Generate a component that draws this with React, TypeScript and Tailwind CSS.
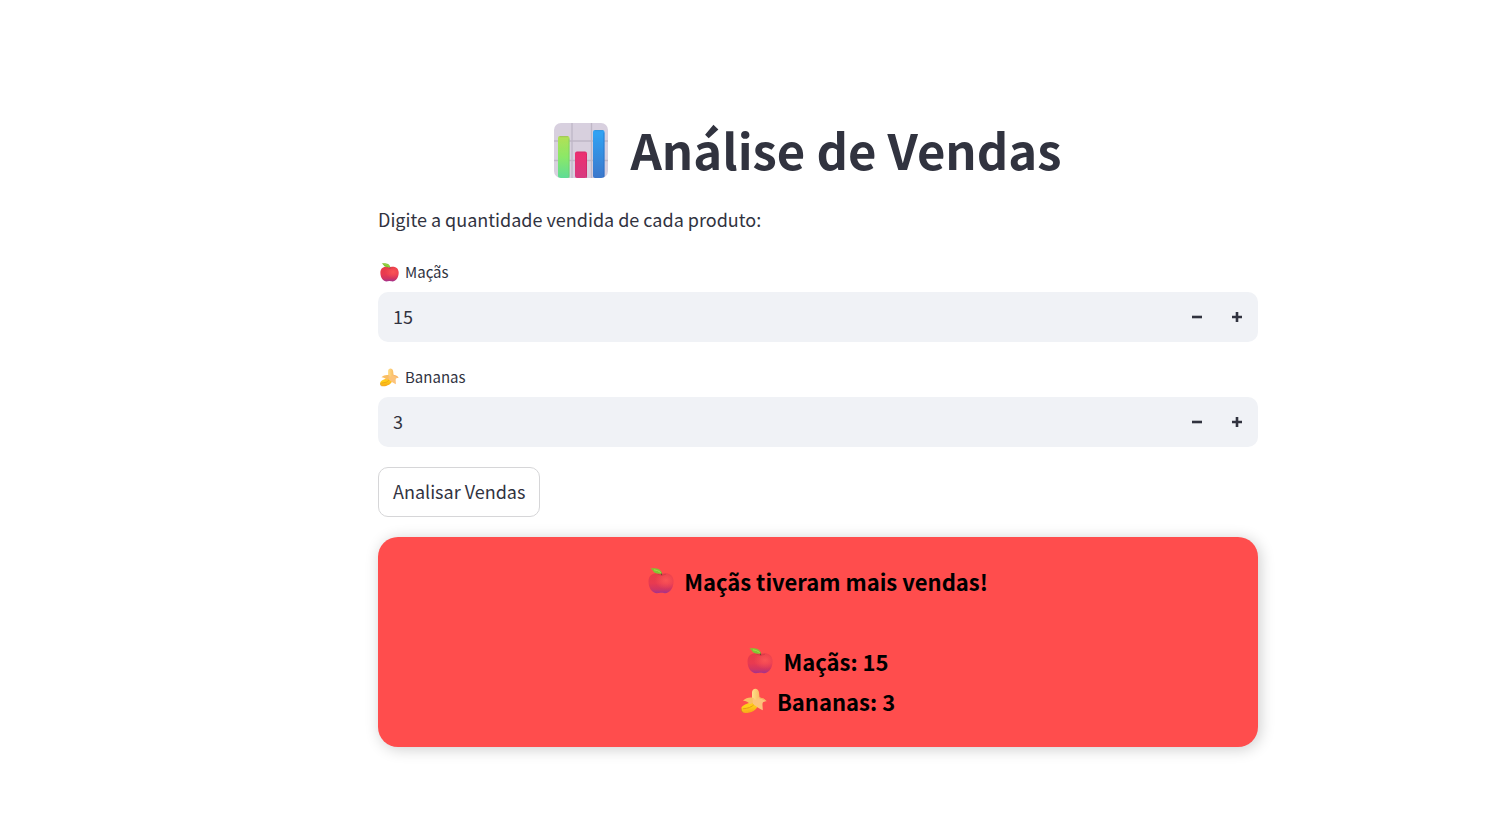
import { useId, useState } from "react";

type IconProps = { className?: string };

function ChartIcon({ className }: IconProps) {
  const id = useId();

  return (
    <svg viewBox="0 0 54 55" className={className} aria-hidden="true">
      <defs>
        <linearGradient id={`${id}-green`} x1="0" y1="0" x2="0" y2="1">
          <stop offset="0" stopColor="#b4e056" />
          <stop offset="0.5" stopColor="#8be868" />
          <stop offset="1" stopColor="#5fdc96" />
        </linearGradient>
        <linearGradient id={`${id}-pink`} x1="0" y1="0" x2="0" y2="1">
          <stop offset="0" stopColor="#ee2e70" />
          <stop offset="1" stopColor="#d63a80" />
        </linearGradient>
        <linearGradient id={`${id}-blue`} x1="0" y1="0" x2="0" y2="1">
          <stop offset="0" stopColor="#31a5f5" />
          <stop offset="1" stopColor="#3b77cb" />
        </linearGradient>
        <clipPath id={`${id}-frame`}>
          <rect width="54" height="55" rx="7" />
        </clipPath>
      </defs>
      <g clipPath={`url(#${id}-frame)`}>
        <rect width="54" height="55" fill="#d8d0df" />
        <path d="M18 0v55M37.500 0v55M0 18h54M0 37.500h54" stroke="#bfb7c6" strokeWidth="1.3" />
        <rect x="4" y="13" width="11.5" height="42" rx="2" fill={`url(#${id}-green)`} />
        <rect x="21" y="28.5" width="12" height="26.5" rx="2" fill={`url(#${id}-pink)`} />
        <rect x="39" y="7" width="11.5" height="48" rx="2" fill={`url(#${id}-blue)`} />
        <path d="M15 15.500v40" stroke="#69c660" strokeWidth="1" opacity="0.5" />
        <path d="M32.500 31v24" stroke="#c51e5c" strokeWidth="1" opacity="0.5" />
        <path d="M50 9.500v45" stroke="#2463b8" strokeWidth="1" opacity="0.5" />
        <path d="M5.500 13.700h8.500M22.500 29.200h9M40.500 7.700h8.500" stroke="#4a4a70" strokeWidth="1" opacity="0.18" />
      </g>
    </svg>
  );
}

const applePath =
  "M13 6.300C16 4.400 25.500 4.200 25.500 13.500C25.500 20.500 21.500 25.200 17 25.200C15 25.200 14.500 24.800 13 24.800C11.500 24.800 11 25.200 9 25.200C4.500 25.200 0.500 20.500 0.500 13.500C0.500 4.200 10 4.400 13 6.300Z";

function AppleIcon({ className }: IconProps) {
  const id = useId();

  return (
    <svg viewBox="0 0 26 26" className={className} aria-hidden="true">
      <defs>
        <linearGradient id={`${id}-body`} x1="0.5" y1="0" x2="0.5" y2="1">
          <stop offset="0" stopColor="#e83c48" />
          <stop offset="0.5" stopColor="#e93a50" />
          <stop offset="0.8" stopColor="#d23562" />
          <stop offset="1" stopColor="#a3328e" />
        </linearGradient>
        <radialGradient id={`${id}-shine`} cx="0.7" cy="0.35" r="0.45">
          <stop offset="0" stopColor="#ff5a58" stopOpacity="0.8" />
          <stop offset="1" stopColor="#ff5a58" stopOpacity="0" />
        </radialGradient>
      </defs>
      <path d={applePath} fill={`url(#${id}-body)`} />
      <path d={applePath} fill={`url(#${id}-shine)`} />
      <path d="M9.500 6.200Q13.500 8.500 18 6.200" stroke="#b02c42" strokeWidth="0.9" fill="none" opacity="0.4" />
      <path d="M13.500 7.200Q13.800 6 13.200 4.800" stroke="#7a4030" strokeWidth="1.2" fill="none" />
      <path d="M2.300 0.600C7 -0.200 13 0.300 14 5.500C9.500 6.200 6.500 5.400 5 3C4.200 1.700 3.600 1.100 2.300 0.600Z" fill="#82c433" />
      <path d="M6 1.800Q10 2.200 12.800 4.600" stroke="#a4da4c" strokeWidth="1" fill="none" />
    </svg>
  );
}

function BananaIcon({ className }: IconProps) {
  const id = useId();

  return (
    <svg viewBox="0 0 26 26" className={className} aria-hidden="true">
      <defs>
        <linearGradient id={`${id}-peel`} x1="0.2" y1="0" x2="0.4" y2="1">
          <stop offset="0" stopColor="#ffb92e" />
          <stop offset="0.5" stopColor="#ffd016" />
          <stop offset="1" stopColor="#f6a51c" />
        </linearGradient>
        <linearGradient id={`${id}-flesh`} x1="0" y1="0" x2="1" y2="0">
          <stop offset="0" stopColor="#ffe08c" />
          <stop offset="1" stopColor="#f8b85f" />
        </linearGradient>
      </defs>
      <path d="M11 12V4.500C11 -0.600 17.600 -0.600 18 4.500L19 14L13 16Z" fill={`url(#${id}-flesh)`} />
      <path
        d="M9 14.500C5 16 0.600 17.500 0.300 20.500C0 24 2.800 25.400 6.500 25C12 24.400 17.500 20.500 18.500 13.500L12 12Z"
        fill={`url(#${id}-peel)`}
      />
      <path d="M1.800 20.800Q9.500 20.500 13.500 16" stroke="#eb991a" strokeWidth="1" fill="none" />
      <path d="M12.500 10C8.500 9 5 10 2 12.700C5 12.900 7.500 14 8.800 16.300L13.500 14.500Z" fill="#fabe62" />
      <path
        d="M11.500 10L15 12.200L18 9.200C21.500 9.800 24.500 11.200 25.600 13.200C23.800 13.200 22.500 13.700 21.700 14.700C21 17.200 22 19.500 21.700 22.300C18.500 20.500 15 18.600 12 16Z"
        fill="#fcc37a"
      />
      <path d="M18.500 10C21.200 10.500 23.200 11.500 24.800 12.900" stroke="#f3a651" strokeWidth="0.8" fill="none" />
      <path d="M0.500 20.500C0 22.500 0.800 24.200 2.200 24.600" stroke="#c98523" strokeWidth="0.7" fill="none" />
    </svg>
  );
}

type QuantityFieldProps = {
  id: string;
  label: string;
  icon: React.ReactNode;
  value: number;
  onChange: (value: number) => void;
};

function QuantityField({ id, label, icon, value, onChange }: QuantityFieldProps) {
  return (
    <div>
      <label htmlFor={id} className="flex h-10 items-center gap-1.5 pl-0.5 text-[15px]">
        {icon}
        {label}
      </label>
      <div className="flex h-[50px] items-center rounded-[10px] bg-[#f0f2f6] pr-px">
        <input
          id={id}
          type="number"
          min={0}
          value={value}
          onChange={(e) => onChange(Number(e.target.value))}
          className="h-full min-w-0 flex-1 bg-transparent pb-0.5 pl-[15px] text-[18px] outline-none [appearance:textfield] [&::-webkit-inner-spin-button]:appearance-none"
        />
        <button
          type="button"
          aria-label={`Diminuir ${label}`}
          onClick={() => onChange(Math.max(0, value - 1))}
          className="flex h-full w-10 items-center justify-center"
        >
          <svg viewBox="0 0 10 10" className="size-2.5" aria-hidden="true">
            <path d="M0 5h10" stroke="currentColor" strokeWidth="2.6" />
          </svg>
        </button>
        <button
          type="button"
          aria-label={`Aumentar ${label}`}
          onClick={() => onChange(value + 1)}
          className="flex h-full w-10 items-center justify-center"
        >
          <svg viewBox="0 0 10 10" className="size-2.5" aria-hidden="true">
            <path d="M0 5h10M5 0v10" stroke="currentColor" strokeWidth="2.6" />
          </svg>
        </button>
      </div>
    </div>
  );
}

export default function App() {
  const [apples, setApples] = useState(15);
  const [bananas, setBananas] = useState(3);
  const [result, setResult] = useState({ apples: 15, bananas: 3 });

  const applesWin = result.apples > result.bananas;
  const tie = result.apples === result.bananas;

  return (
    <div className="min-h-screen bg-white pl-[134px] font-['Noto_Sans_CJK_SC','Noto_Sans',sans-serif] text-[#31333f]">
      <main className="mx-auto max-w-[920px] px-5 pt-[117px] pb-20">
        <h1 className="flex h-[66px] items-center justify-center gap-[22px] pr-5 text-[49px] font-bold">
          <ChartIcon className="h-[55px] w-[54px]" />
          <span className="pb-0.5">Análise de Vendas</span>
        </h1>

        <p className="mt-5 text-[18px] leading-8">Digite a quantidade vendida de cada produto:</p>

        <div className="mt-[17px] flex flex-col gap-[15px]">
          <QuantityField
            id="apples"
            label="Maçãs"
            icon={<AppleIcon className="size-[19px]" />}
            value={apples}
            onChange={setApples}
          />
          <QuantityField
            id="bananas"
            label="Bananas"
            icon={<BananaIcon className="size-[19px]" />}
            value={bananas}
            onChange={setBananas}
          />
        </div>

        <button
          type="button"
          onClick={() => setResult({ apples, bananas })}
          className="mt-5 flex h-[50px] items-center rounded-[10px] border border-[#d6d6d8] bg-white px-3.5 pb-0.5 text-[18px]"
        >
          Analisar Vendas
        </button>

        {/* RESULT */}
        <section className="mt-5 rounded-[20px] bg-[#ff4d4d] px-6 pt-6 pb-[26px] text-[22px] leading-10 font-bold text-black shadow-[2px_2px_15px_rgba(0,0,0,0.2)]">
          <p className="mb-10 flex items-center justify-center gap-2.5">
            {applesWin || tie ? <AppleIcon className="size-[26px]" /> : <BananaIcon className="size-[26px]" />}
            {tie ? "As vendas foram iguais!" : `${applesWin ? "Maçãs" : "Bananas"} tiveram mais vendas!`}
          </p>
          <p className="flex items-center justify-center gap-2.5">
            <AppleIcon className="size-[26px]" />
            Maçãs: {result.apples}
          </p>
          <p className="flex items-center justify-center gap-2.5">
            <BananaIcon className="size-[26px]" />
            Bananas: {result.bananas}
          </p>
        </section>
      </main>
    </div>
  );
}
